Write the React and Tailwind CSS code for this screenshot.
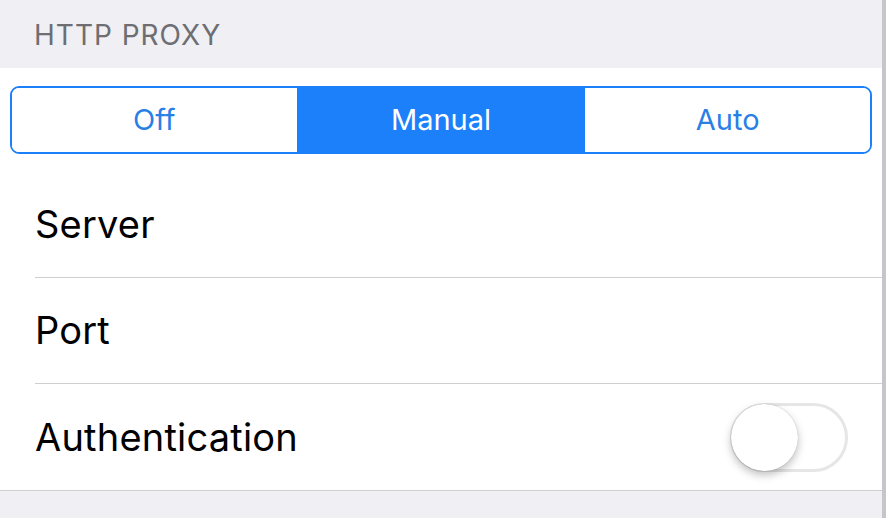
import { useState } from 'react'

const font = { fontFamily: 'Inter, "Noto Sans", sans-serif' }

function Segmented({ options, value, onChange }) {
  return (
    <div className="flex h-[68px] mx-[10px] border-2 border-[#1b80fa] rounded-[9px] overflow-hidden">
      {options.map((opt, i) => {
        const active = opt === value
        return (
          <button
            key={opt}
            onClick={() => onChange(opt)}
            className={
              'flex-1 flex items-center justify-center text-[29px] ' +
              (i > 0 ? 'border-l-2 border-[#1b80fa] ' : '') +
              (active ? 'bg-[#1b80fa] text-white' : 'bg-white text-[#2a7fe6]')
            }
          >
            {opt}
          </button>
        )
      })}
    </div>
  )
}

function Toggle({ on, onChange }) {
  return (
    <button
      onClick={() => onChange(!on)}
      className={
        'relative w-[118px] h-[69px] rounded-full border-[3px] ' +
        (on ? 'bg-[#4cd964] border-[#4cd964]' : 'bg-white border-[#e6e6e6]')
      }
    >
      <span
        className={
          'absolute top-[-2px] w-[67px] h-[67px] rounded-full bg-white shadow-[0_4px_8px_rgba(0,0,0,0.25),0_0_1px_rgba(0,0,0,0.3)] ' +
          (on ? 'left-[46px]' : 'left-[-2px]')
        }
      />
    </button>
  )
}

function Row({ label, children, last }) {
  return (
    <div className="pl-[35px]">
      <div className={'h-[106px] flex items-center justify-between pr-[34px] ' + (last ? '' : 'border-b border-[#cfcfd3]')}>
        <span className="text-[38px] text-black tracking-[0.2px]">{label}</span>
        {children}
      </div>
    </div>
  )
}

export default function App() {
  const [mode, setMode] = useState('Manual')
  const [auth, setAuth] = useState(false)
  return (
    <div className="w-[886px] h-[518px] flex bg-[#efeff4] overflow-hidden" style={font}>
      <div className="w-[882px] flex flex-col">
        <div className="h-[68px] flex items-center pl-[34px] pt-[2px]">
          <span className="text-[28px] text-[#6d6d72] tracking-[1px]">HTTP PROXY</span>
        </div>
        <div className="bg-white border-b border-[#cfcfd3]">
          <div className="py-[18px]">
            <Segmented options={['Off', 'Manual', 'Auto']} value={mode} onChange={setMode} />
          </div>
          <Row label="Server" />
          <Row label="Port" />
          <Row label="Authentication" last>
            <Toggle on={auth} onChange={setAuth} />
          </Row>
        </div>
      </div>
      <div className="w-[4px] bg-[#c6c6ca]" />
    </div>
  )
}
